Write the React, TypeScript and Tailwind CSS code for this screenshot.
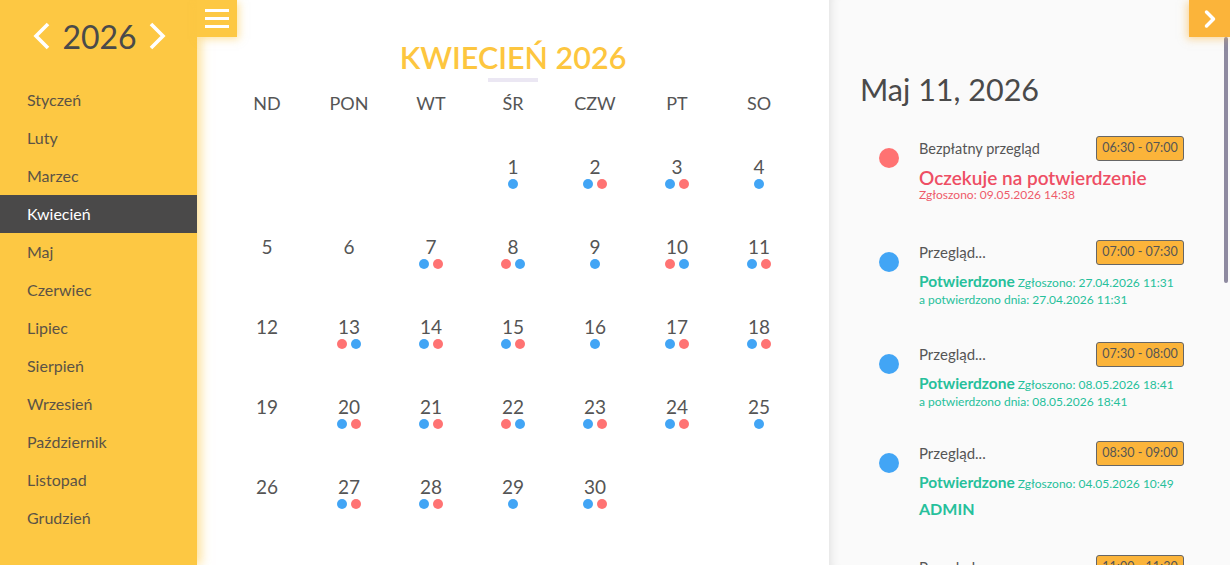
import { ChevronRight } from "lucide-react";

const months = [
  "Styczeń",
  "Luty",
  "Marzec",
  "Kwiecień",
  "Maj",
  "Czerwiec",
  "Lipiec",
  "Sierpień",
  "Wrzesień",
  "Październik",
  "Listopad",
  "Grudzień",
];

const weekdays = ["ND", "PON", "WT", "ŚR", "CZW", "PT", "SO"];

// b = blue, r = red
const dots: Record<number, string> = {
  1: "b", 2: "br", 3: "br", 4: "b", 7: "br", 8: "rb", 9: "b", 10: "rb", 11: "br",
  13: "rb", 14: "br", 15: "br", 16: "b", 17: "br", 18: "br", 20: "br", 21: "br",
  22: "rb", 23: "br", 24: "br", 25: "b", 27: "br", 28: "br", 29: "b", 30: "br",
};

const cells: (number | null)[] = [null, null, null, ...Array.from({ length: 30 }, (_, i) => i + 1)];

function Chevron({ left }: { left?: boolean }) {
  return (
    <svg width="20" height="28" viewBox="0 0 20 28" className="shrink-0">
      <polyline
        points={left ? "16,2 4,14 16,26" : "4,2 16,14 4,26"}
        fill="none"
        stroke="white"
        strokeWidth="3.6"
      />
    </svg>
  );
}

function Badge({ children }: { children: string }) {
  return (
    <span className="h-[25px] w-[88px] flex items-center justify-center rounded-[3px] border border-[#666] bg-[#fbb43a] text-[12.5px] text-[#555]">
      {children}
    </span>
  );
}

function Dot({ red }: { red?: boolean }) {
  return <span className={`mt-[12px] h-[20px] w-[20px] shrink-0 rounded-full ${red ? "bg-[#ff7272]" : "bg-[#42a5f5]"}`} />;
}

export default function App() {
  return (
    <div className="flex h-[565px] w-[1230px] overflow-hidden bg-white font-['Lato','Noto_Sans',sans-serif] text-[#555]">
      {/* sidebar */}
      <aside className="relative z-10 w-[197px] shrink-0 bg-[#fdc843] shadow-[4px_0_10px_rgba(253,200,67,0.55)]">
        <div className="flex h-[81px] items-start justify-center gap-[10px] pt-[22px] pl-[2px]">
          <Chevron left />
          <span className="-mt-[3px] text-[32px] leading-[36px] text-[#4a4a4a]">2026</span>
          <Chevron />
        </div>
        <ul>
          {months.map((m) => (
            <li
              key={m}
              className={`flex h-[38px] items-center px-[27px] text-[16px] ${
                m === "Kwiecień" ? "bg-[#4a4949] text-white" : "text-[#5b5346]"
              }`}
            >
              {m}
            </li>
          ))}
        </ul>
      </aside>

      {/* calendar */}
      <main className="relative w-[632px] shrink-0 bg-white">
        <button className="absolute left-0 top-0 z-20 flex h-[37px] w-[40px] flex-col items-center justify-center gap-[5px] bg-[#fdc843] shadow-[2px_2px_8px_rgba(253,200,67,0.5)]">
          <span className="h-[3px] w-[24px] bg-white" />
          <span className="h-[3px] w-[24px] bg-white" />
          <span className="h-[3px] w-[24px] bg-white" />
        </button>
        <div className="flex flex-col items-center pt-[38px]">
          <h1 className="text-[30.5px] font-semibold leading-[38px] text-[#fdc63f]">KWIECIEŃ 2026</h1>
          <div className="mt-[2px] h-[4px] w-[50px] bg-[#ebe7f3]" />
        </div>
        <div className="ml-[29px] mt-[9px] grid w-[574px] grid-cols-7">
          {weekdays.map((d) => (
            <div key={d} className="text-center text-[18px] leading-[24px] text-[#555]">
              {d}
            </div>
          ))}
        </div>
        <div className="ml-[29px] mt-[40px] grid w-[574px] grid-cols-7">
          {cells.map((n, i) => (
            <div key={i} className="flex h-[80px] flex-col items-center">
              {n && (
                <>
                  <span className="text-[19px] leading-[24px] text-[#555]">{n}</span>
                  <div className="flex gap-[4px]">
                    {(dots[n] || "").split("").map((c, j) => (
                      <span key={j} className={`h-[10px] w-[10px] rounded-full ${c === "r" ? "bg-[#ff7373]" : "bg-[#42a5f5]"}`} />
                    ))}
                  </div>
                </>
              )}
            </div>
          ))}
        </div>
      </main>

      {/* day details */}
      <section className="relative flex-1 bg-[#fafafa] shadow-[inset_10px_0_10px_-8px_rgba(0,0,0,0.1)]">
        <button className="absolute right-0 top-0 z-20 flex h-[37px] w-[41px] items-center justify-center bg-[#fbb43a] shadow-[-2px_2px_8px_rgba(251,180,58,0.5)]">
          <ChevronRight className="h-[28px] w-[28px] text-white" strokeWidth={3} />
        </button>
        <div className="absolute right-[2px] top-[37px] h-[246px] w-[4px] rounded-full bg-[#8e8aa0]" />

        <h2 className="pl-[31px] pt-[70px] text-[30.5px] leading-[38px] text-[#4a4a4a]">Maj 11, 2026</h2>

        <div className="mt-[28px] pl-[50px]">
          <div className="flex h-[104px]">
            <Dot red />
            <div className="ml-[20px] w-[265px]">
              <div className="flex items-center justify-between">
                <span className="text-[14.5px] text-[#555]">Bezpłatny przegląd</span>
                <Badge>06:30 - 07:00</Badge>
              </div>
              <div className="mt-[6px] text-[19px] font-semibold leading-[21px] text-[#ee4e64]">Oczekuje na potwierdzenie</div>
              <div className="text-[12px] leading-[13px] text-[#ee5a6a]">Zgłoszono: 09.05.2026 14:38</div>
            </div>
          </div>

          <div className="flex h-[102px]">
            <Dot />
            <div className="ml-[20px] w-[265px]">
              <div className="flex items-center justify-between">
                <span className="text-[15px] text-[#555]">Przegląd...</span>
                <Badge>07:00 - 07:30</Badge>
              </div>
              <div className="mt-[7px] text-[12px] leading-[18px] text-[#26c09b]">
                <span className="text-[15.5px] font-bold">Potwierdzone</span> Zgłoszono: 27.04.2026 11:31
              </div>
              <div className="text-[12px] leading-[15px] text-[#26c09b]">a potwierdzono dnia: 27.04.2026 11:31</div>
            </div>
          </div>

          <div className="flex h-[99px]">
            <Dot />
            <div className="ml-[20px] w-[265px]">
              <div className="flex items-center justify-between">
                <span className="text-[15px] text-[#555]">Przegląd...</span>
                <Badge>07:30 - 08:00</Badge>
              </div>
              <div className="mt-[7px] text-[12px] leading-[18px] text-[#26c09b]">
                <span className="text-[15.5px] font-bold">Potwierdzone</span> Zgłoszono: 08.05.2026 18:41
              </div>
              <div className="text-[12px] leading-[15px] text-[#26c09b]">a potwierdzono dnia: 08.05.2026 18:41</div>
            </div>
          </div>

          <div className="flex h-[114px]">
            <Dot />
            <div className="ml-[20px] w-[265px]">
              <div className="flex items-center justify-between">
                <span className="text-[15px] text-[#555]">Przegląd...</span>
                <Badge>08:30 - 09:00</Badge>
              </div>
              <div className="mt-[7px] text-[12px] leading-[18px] text-[#26c09b]">
                <span className="text-[15.5px] font-bold">Potwierdzone</span> Zgłoszono: 04.05.2026 10:49
              </div>
              <div className="mt-[6px] text-[16px] font-bold leading-[20px] text-[#26c09b]">ADMIN</div>
            </div>
          </div>

          <div className="flex">
            <Dot />
            <div className="ml-[20px] w-[265px]">
              <div className="flex items-center justify-between">
                <span className="text-[15px] text-[#555]">Przegląd...</span>
                <Badge>11:00 - 11:30</Badge>
              </div>
            </div>
          </div>
        </div>
      </section>
    </div>
  );
}
